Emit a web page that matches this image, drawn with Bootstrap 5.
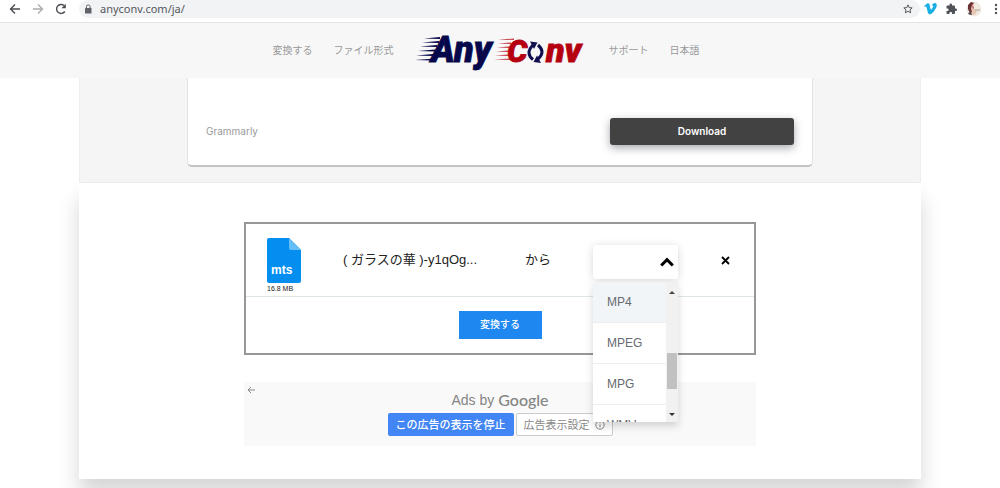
<!DOCTYPE html>
<html lang="ja">
<head>
<meta charset="utf-8">
<meta name="viewport" content="width=device-width, initial-scale=1">
<title>AnyConv</title>
<link href="https://cdn.jsdelivr.net/npm/bootstrap@5.3.0/dist/css/bootstrap.min.css" rel="stylesheet">
<style>
  body { font-family: "Liberation Sans", "Noto Sans CJK JP", sans-serif; font-size: 12px; line-height: 16px; background: #fff; color: #222; overflow-x: hidden; }
  svg { display: block; flex: none; }

  .browser-bar { height: 23px; padding: 0 2px 4px 9px; border-bottom: 1px solid #e4e4e4; color: #4a4d51; }
  .browser-bar button, .plain-btn { border: 0; background: none; padding: 0; color: inherit; }
  .nav-tools { gap: 11px; }
  .browser-bar .dim { color: #aaa; }
  .address { background: #f1f3f4; border-radius: 9px; height: 18px; padding: 0 7px 0 5px; margin-left: 12px; }
  .address input { border: 0; background: none; padding: 0; outline: 0; font: 11px/16px "Noto Sans", sans-serif; color: #55585c; min-width: 0; }

  .site-header { background: #f7f7f7; height: 55px; }
  .site-header nav { gap: 21px; padding-right: 28px; }
  .site-header nav a { font-size: 10px; color: #999; text-decoration: none; }
  .brand-logo { margin-right: 3px; }
  .brand-logo text { font-family: Roboto, sans-serif; font-weight: 900; font-style: italic; }

  .page-wide { max-width: 842px; }
  .promo-band { background: #f5f5f5; border: 1px solid #eee; border-top: 0; height: 105px; }
  .promo-box { max-width: 626px; height: 89px; background: #fff; border: 1px solid #e2e2e2; border-top: 0; border-bottom: 2px solid #c4c4c4; border-radius: 0 0 5px 5px; padding: 19px 18px 0; font-family: Inter, sans-serif; font-size: 10px; color: #999; }
  .download-btn { width: 184px; height: 27px; border: 0; border-radius: 3px; background: #424242; color: #fff; font-weight: 600; font-size: 10px; box-shadow: 0 3px 8px rgba(60,64,80,.45); }

  .main-panel { background: #fff; box-shadow: 0 16px 20px rgba(0,0,0,.16); padding: 39px 16px 33px; margin-bottom: 9px; }
  .converter { max-width: 512px; border: 2px solid #979797; }
  .file-row { height: 73px; border-bottom: 1px solid #dfe6ea; padding: 0 24px 0 21px; }
  .file-kind { width: 76px; font-size: 7px; line-height: 10px; padding-bottom: 2px; }
  .file-kind text { font: bold 12px "Liberation Sans", sans-serif; }
  .file-name { width: 182px; font-size: 13px; line-height: 20px; white-space: nowrap; }
  .from-label { width: 68px; font-size: 13px; line-height: 20px; }
  .format-pick { width: 85px; height: 34px; margin-top: 3px; }
  .format-pick select { appearance: none; width: 100%; height: 100%; border: 0; border-radius: 3px; background: #fff; padding: 0 26px 0 14px; box-shadow: 0 1px 8px rgba(0,0,0,.16); }
  .format-pick .chevron { position: absolute; right: 4px; top: 12px; pointer-events: none; }
  .format-menu { position: absolute; left: 0; top: 37px; width: 100%; height: 140px; z-index: 5; background: #fff; box-shadow: 0 4px 8px rgba(0,0,0,.16); overflow: hidden; }
  .format-menu button { display: block; width: 100%; height: 41px; border: 0; border-bottom: 1px solid #eee; background: #fff; text-align: left; padding: 0 14px; color: #666a70; }
  .format-menu button.chosen { background: #f1f5f8; }
  .scroll-track { width: 12px; background: #f1f1f1; padding: 8px 1px 5px; }
  .scroll-thumb { width: 10px; height: 36px; background: #c1c1c1; }
  .submit-row { height: 56px; }
  .convert-btn { width: 83px; height: 28px; border: 0; border-radius: 0; background: #1e88f0; color: #fff; font-size: 10px; font-weight: 500; padding: 0; }

  .ads-box { max-width: 512px; height: 64px; margin-top: 27px; background: #f9f9f9; color: #858585; }
  .ads-back { position: absolute; left: 3px; top: 4px; }
  .ads-title { font-size: 14px; line-height: 20px; padding-top: 8px; gap: 4px; }
  .ads-title b { font: 500 16px/20px Lato, sans-serif; }
  .ads-actions { gap: 2px; margin-top: 3px; }
  .ads-actions button { height: 23px; border-radius: 2px; font-size: 11px; line-height: 16px; white-space: nowrap; padding: 0 7px; }
  .stop-btn { width: 126px; border: 0; background: #4285f4; color: #fff; font-weight: 500; }
  .why-btn { width: 97px; border: 1px solid #ccc; background: #fff; color: #888; }
</style>
</head>
<body>

<div class="browser-bar d-flex align-items-center">
  <div class="nav-tools d-flex align-items-center">
    <button aria-label="Back"><svg width="12" height="12" viewBox="0 0 12 12" fill="none" stroke="currentColor" stroke-width="1.4"><path d="M11 6H2M6 1.5L1.5 6 6 10.500"/></svg></button>
    <button aria-label="Forward" class="dim"><svg width="12" height="12" viewBox="0 0 12 12" fill="none" stroke="currentColor" stroke-width="1.3"><path d="M1 6h9M6 1.500L10.500 6 6 10.500"/></svg></button>
    <button aria-label="Reload"><svg width="12" height="12" viewBox="0 0 12 12"><path d="M9.800 8.500A4.500 4.500 0 1 1 9 2.500" fill="none" stroke="currentColor" stroke-width="1.400"/><path d="M10.800 0.800v4.400H6.400z" fill="currentColor"/></svg></button>
  </div>
  <div class="address d-flex align-items-center flex-grow-1">
    <svg width="8" height="10" viewBox="0 0 8 10"><rect x="1" y="4" width="6.500" height="5.500" rx=".6" fill="#5f6368"/><path d="M2.400 4.500V2.800a1.850 1.850 0 0 1 3.700 0V4.500" fill="none" stroke="#5f6368"/></svg>
    <input class="flex-grow-1 ms-2" type="text" aria-label="Address" value="anyconv.com/ja/">
    <button aria-label="Bookmark"><svg width="10" height="10" viewBox="0 0 10 10" fill="none" stroke="#55585c"><path d="M5 .9l1.200 2.700 3 .3L7 5.900l.65 2.900L5 7.300 2.350 8.800 3 5.900.8 3.900l3-.3z"/></svg></button>
  </div>
  <div class="d-flex align-items-center">
    <svg class="ms-1" width="13" height="12" viewBox="0 0 24 22" fill="#19aee5"><path d="M23.500 5.200c-.1 2.300-1.700 5.400-4.800 9.400-3.200 4.200-5.900 6.300-8.200 6.300-1.400 0-2.500-1.300-3.500-3.900L5.200 10c-.7-2.600-1.500-3.900-2.300-3.900-.2 0-.8.400-1.900 1.100L0 5.800C2.700 3.300 5.400.6 7.200.4c1.900-.2 3.100 1.100 3.500 3.900.9 5.500 1.500 8.300 2.300 8.300.7 0 3.900-4.800 4-6.500.2-1.700-1.200-1.800-2.500-1.200C15.500 1.500 17.600-.2 20.500 0c2.200.1 3.200 1.900 3 5.200z"/></svg>
    <svg class="mx-2" width="13" height="12" viewBox="0 0 24 24" fill="#505357"><path d="M20.500 11H19V7a2 2 0 0 0-2-2h-4V3.500a2.500 2.500 0 0 0-5 0V5H4a2 2 0 0 0-2 2v3.800h1.500a2.700 2.700 0 0 1 0 5.400H2V20a2 2 0 0 0 2 2h3.800v-1.500a2.700 2.700 0 0 1 5.400 0V22H17a2 2 0 0 0 2-2v-4h1.500a2.500 2.500 0 0 0 0-5z"/></svg>
    <svg class="me-2" width="16" height="16" viewBox="0 0 16 16"><circle cx="8" cy="8" r="7.500" fill="#f0ebe2"/><path d="M4 1.500Q8 0 8.500 3L7 5l1 3 3 2-2 4-5-1L2 8z" fill="#e9c7b5"/><path d="M2 4l3-3 3 1-2 2-1 4 1 3-2 1-2-4z" fill="#6b3036"/><path d="M2 12l3-1 1 3-3-.5z" fill="#514245"/><path d="M6 4l2 2-1 3z" fill="#c85662"/><path d="M9 9h5" stroke="#a49d8c"/></svg>
    <svg class="ms-1" width="4" height="12" viewBox="0 0 4 12" fill="#505357"><circle cx="2" cy="2" r="1.200"/><circle cx="2" cy="6" r="1.200"/><circle cx="2" cy="10" r="1.200"/></svg>
  </div>
</div>

<header class="site-header">
  <nav class="d-flex align-items-center justify-content-center h-100">
    <a href="#">変換する</a>
    <a href="#">ファイル形式</a>
    <a href="#" class="brand-logo" aria-label="AnyConv">
      <svg width="170" height="40" viewBox="0 0 170 40">
        <g fill="#07074c">
          <path d="M9 7.500L25 6v2zM7 11.500L24 10v2zM5 15.500L22 14v2zM3 20L20 18.500v2zM1 24.500L18 23v2zM0 29L17 27.700v1.800z"/>
          <text x="16" y="31" font-size="36" stroke="#07074c" stroke-width=".8">Any</text>
        </g>
        <g fill="#b50010">
          <path d="M83 8.500l16-1v1.500zM83 12.500l13-1V13zM82 16.500l12-1V17zM81 20.500l12-1V21zM80 24.500l13-1V25zM79 28.500l16-1V29z" opacity=".75"/>
          <text x="92" y="31" font-size="32" stroke="#b50010" stroke-width=".8">C</text>
          <text x="131" y="31" font-size="34" stroke="#b50010" stroke-width=".8">nv</text>
        </g>
        <g fill="none" stroke="#10104e" stroke-width="3"><path d="M118 28.500Q110 22 118 14M123 14Q131 21 123 28"/></g>
        <path d="M115 10.500l7.500 1-3.500 6.500zM126 32l-7.500-1 3.500-6.500z" fill="#10104e"/>
      </svg>
    </a>
    <a href="#">サポート</a>
    <a href="#">日本語</a>
  </nav>
</header>

<div class="page-wide promo-band mx-auto">
  <div class="promo-box mx-auto d-flex align-items-center justify-content-between">
    <span>Grammarly</span>
    <button class="download-btn">Download</button>
  </div>
</div>

<main class="page-wide main-panel mx-auto">
  <form class="converter mx-auto">
    <div class="file-row d-flex align-items-center">
      <div class="file-kind align-self-end">
        <svg width="34" height="46" viewBox="0 0 34 46"><path d="M2 0h20l12 12v31a2 2 0 0 1-2 2H2a2 2 0 0 1-2-2V2a2 2 0 0 1 2-2z" fill="#048ff0"/><path d="M22 0l12 12H24a2 2 0 0 1-2-2z" fill="#65bdf8"/><text x="4" y="36" fill="#fff">mts</text></svg>
        <div>16.8 MB</div>
      </div>
      <div class="file-name">( ガラスの華 )-y1qOg...</div>
      <label class="from-label" for="format">から</label>
      <div class="format-pick position-relative">
        <select id="format"><option selected></option><option>MP4</option><option>MPEG</option><option>MPG</option><option>WMV</option></select>
        <svg class="chevron" width="14" height="10" viewBox="0 0 14 10" fill="none" stroke="#000" stroke-width="3"><path d="M1.200 8.500L7 2.600l5.800 5.900"/></svg>
        <div class="format-menu d-flex">
          <div class="flex-grow-1">
            <button type="button" class="chosen">MP4</button>
            <button type="button">MPEG</button>
            <button type="button">MPG</button>
            <button type="button">WMV</button>
          </div>
          <div class="scroll-track d-flex flex-column align-items-center">
            <svg width="6" height="4" viewBox="0 0 6 4"><path d="M0 4l3-3 3 3z" fill="#444"/></svg>
            <div class="scroll-thumb mt-auto mb-4"></div>
            <svg width="6" height="4" viewBox="0 0 6 4"><path d="M0 0l3 3 3-3z" fill="#333"/></svg>
          </div>
        </div>
      </div>
      <button type="button" class="plain-btn ms-auto" aria-label="Remove"><svg width="9" height="9" viewBox="0 0 9 9" stroke="#000" stroke-width="1.800"><path d="M1 1l7 7M8 1L1 8"/></svg></button>
    </div>
    <div class="submit-row d-flex align-items-center justify-content-center">
      <button type="submit" class="convert-btn">変換する</button>
    </div>
  </form>

  <aside class="ads-box mx-auto position-relative">
    <button class="plain-btn ads-back" aria-label="戻る"><svg width="8" height="8" viewBox="0 0 8 8" fill="none" stroke="#888"><path d="M8 4H1M4 1L1 4l3 3"/></svg></button>
    <div class="ads-title d-flex justify-content-center"><span>Ads by</span><b>Google</b></div>
    <div class="ads-actions d-flex justify-content-center">
      <button class="stop-btn">この広告の表示を停止</button>
      <button class="why-btn d-flex align-items-center justify-content-between">広告表示設定 <svg width="10" height="10" viewBox="0 0 10 10" fill="none" stroke="#888"><circle cx="5" cy="5" r="4.200"/><path d="M5 4.300v3M5 2.300v1"/></svg></button>
    </div>
  </aside>
</main>

<script src="https://cdn.jsdelivr.net/npm/bootstrap@5.3.0/dist/js/bootstrap.bundle.min.js"></script>
</body>
</html>
